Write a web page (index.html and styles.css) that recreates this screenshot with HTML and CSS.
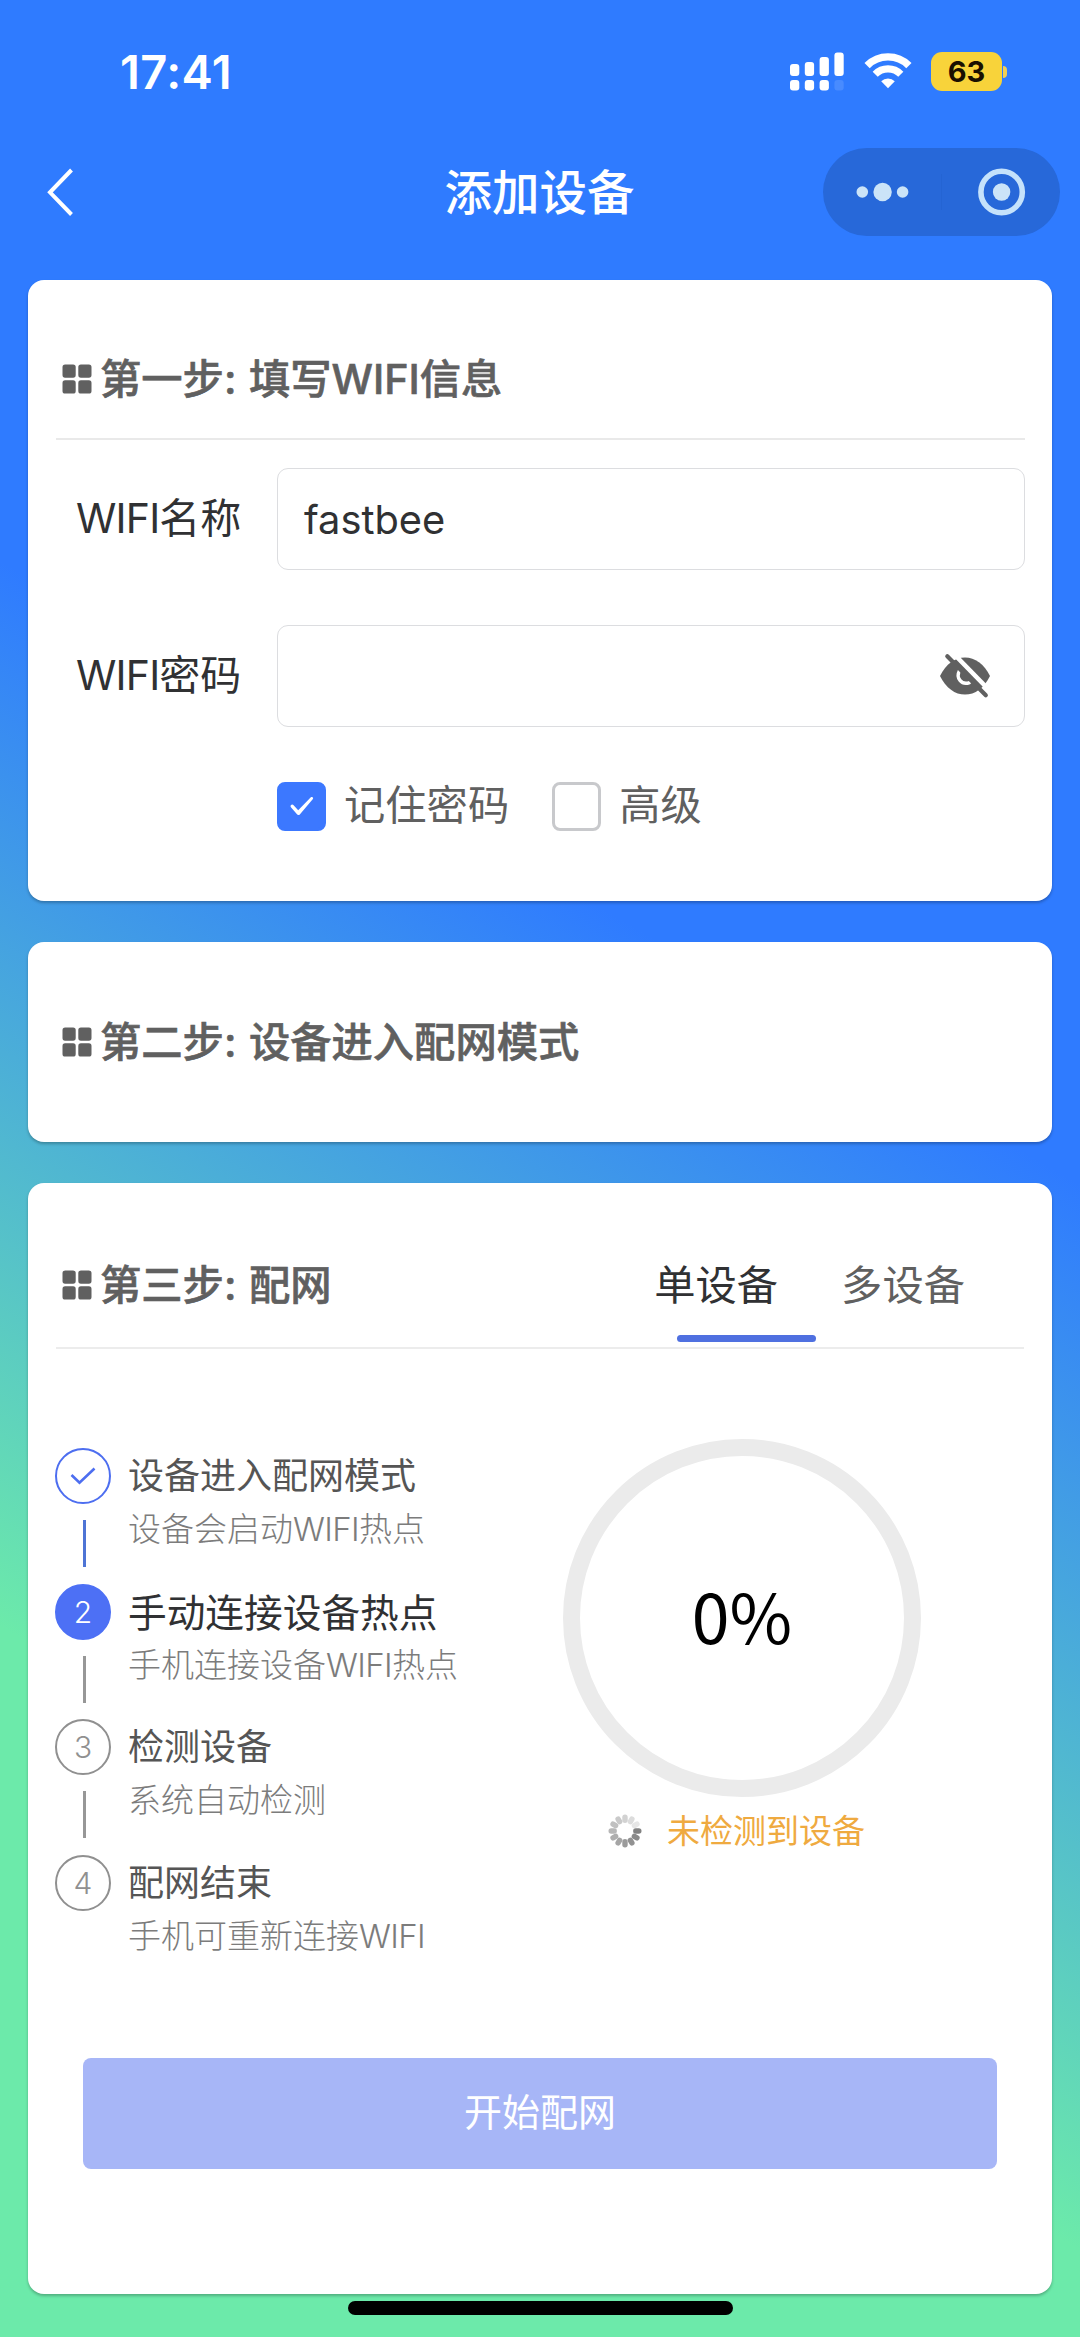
FILE: index.html
```html
<!DOCTYPE html>
<html lang="zh-CN">
<head>
<meta charset="utf-8">
<title>添加设备</title>
<link rel="stylesheet" href="styles.css">
</head>
<body>
<svg class="defs" width="0" height="0">
  <symbol id="grid" viewBox="0 0 30 30">
    <rect x="0.5" y="0.5" width="13.2" height="13.2" rx="2.6"/>
    <rect x="16.3" y="0.5" width="13.2" height="13.2" rx="2.6"/>
    <rect x="0.5" y="16.3" width="13.2" height="13.2" rx="2.6"/>
    <rect x="16.3" y="16.3" width="13.2" height="13.2" rx="2.6"/>
  </symbol>
</svg>
<div class="screen">
  <header class="status">
    <span class="time">17:41</span>
    <div class="indicators">
      <svg class="signal" width="54" height="39" viewBox="0 0 54 39" fill="#fff">
        <rect x="0" y="12" width="9.3" height="12" rx="3"/>
        <rect x="14.8" y="10" width="9.3" height="14" rx="3"/>
        <rect x="29.6" y="5" width="9.3" height="19" rx="3"/>
        <rect x="44.4" y="0.4" width="9.3" height="23.6" rx="3"/>
        <rect x="0" y="28" width="9.3" height="10.5" rx="3"/>
        <rect x="14.8" y="28" width="9.3" height="10.5" rx="3"/>
        <rect x="29.6" y="28" width="9.3" height="10.5" rx="3"/>
        <rect x="44.4" y="28" width="9.3" height="10.5" rx="3" fill-opacity=".12"/>
      </svg>
      <svg class="wifi" width="48" height="36" viewBox="0 0 48 36" fill="none" stroke="#fff">
        <path d="M3.1 12.6 A29.5 29.5 0 0 1 44.9 12.6" stroke-width="7.4"/>
        <path d="M11.2 21.2 A18 18 0 0 1 36.8 21.2" stroke-width="7.2"/>
        <path d="M24 35.3 L17.2 28.2 A9.8 9.8 0 0 1 30.8 28.2 Z" fill="#fff" stroke="none"/>
      </svg>
      <div class="battery"><span class="level">63</span><span class="nub"></span></div>
    </div>
  </header>
  <nav class="navbar">
    <svg class="back" width="28" height="50" viewBox="0 0 28 50" fill="none" stroke="#fff" stroke-width="4">
      <path d="M25.5 3 L4 25.3 L25.5 47.5"/>
    </svg>
    <h1 class="title">添加设备</h1>
    <div class="capsule">
      <svg width="237" height="88" viewBox="0 0 237 88">
        <g fill="#cbe4f8"><circle cx="39.3" cy="44" r="5.8"/><circle cx="59.6" cy="44" r="9.2"/><circle cx="79.6" cy="44" r="5.8"/></g>
        <path d="M118.5 26 V62" stroke="#2464d3" stroke-width="1"/>
        <circle cx="178.6" cy="44" r="20.7" fill="none" stroke="#c5e2fb" stroke-width="5.6"/>
        <circle cx="178.6" cy="44" r="8.7" fill="#cbe4f8"/>
      </svg>
    </div>
  </nav>
  <main class="cards">
    <section class="card card-wifi">
      <h2 class="step-title"><svg class="grid"><use href="#grid"/></svg>第一步: 填写WIFI信息</h2>
      <div class="rule"></div>
      <div class="form">
        <div class="field"><label class="label"><span class="latin">WIFI</span>名称</label><div class="input">fastbee</div></div>
        <div class="field"><label class="label"><span class="latin">WIFI</span>密码</label>
          <div class="input secret">
            <svg class="eye" width="52" height="44" viewBox="0 0 52 44">
              <path d="M1 22 C7 10 16 3.6 26 3.6 C36 3.6 45 10 51 22 C45 34 36 40.6 26 40.6 C16 40.6 7 34 1 22 Z" fill="#606060"/>
              <path d="M20.5 16.5 C16.5 24 22.5 31.5 30.5 28.6" fill="none" stroke="#fff" stroke-width="3.4" stroke-linecap="round"/>
              <path d="M11 -4 L54.5 40.5" stroke="#fff" stroke-width="4.6"/>
              <path d="M8.3 2.3 L46.8 41.3" stroke="#606060" stroke-width="4.2" stroke-linecap="round"/>
            </svg>
          </div>
        </div>
      </div>
      <div class="options">
        <span class="box checked"><svg width="24" height="20" viewBox="0 0 24 20" fill="#fff"><path d="M0.8 9.3 C1.6 8.4 2.8 8.3 3.6 9.2 L8.2 14.2 L20.6 1.4 C21.8 0.2 23.9 1.3 22.9 2.9 L10 18.2 C9 19.4 7.6 19.3 6.8 18 L0.9 11.2 C0.4 10.5 0.4 9.9 0.8 9.3 Z"/></svg></span>
        <span class="option first">记住密码</span>
        <span class="box"></span>
        <span class="option">高级</span>
      </div>
    </section>

    <section class="card card-mode">
      <h2 class="step-title"><svg class="grid"><use href="#grid"/></svg>第二步: 设备进入配网模式</h2>
    </section>

    <section class="card card-net">
      <div class="head">
        <h2 class="step-title"><svg class="grid"><use href="#grid"/></svg>第三步: 配网</h2>
        <div class="tabs"><span class="tab active">单设备</span><span class="tab">多设备</span></div>
      </div>
      <div class="body">
        <ol class="steps">
          <li class="step done"><span class="dot"><svg width="26" height="18" viewBox="0 0 26 18" fill="none" stroke="#4d6ef0" stroke-width="2.6"><path d="M1.5 8 L9.5 15.8 L24.5 1.5"/></svg></span><span class="name">设备进入配网模式</span><i class="line"></i><span class="desc">设备会启动<span class="latin">WIFI</span>热点</span></li>
          <li class="step current"><span class="dot">2</span><span class="name">手动连接设备热点</span><i class="line"></i><span class="desc">手机连接设备<span class="latin">WIFI</span>热点</span></li>
          <li class="step"><span class="dot">3</span><span class="name">检测设备</span><i class="line"></i><span class="desc">系统自动检测</span></li>
          <li class="step last"><span class="dot">4</span><span class="name">配网结束</span><i class="line"></i><span class="desc">手机可重新连接<span class="latin">WIFI</span></span></li>
        </ol>
        <div class="progress">
          <div class="ring">0%</div>
          <div class="state">
            <svg class="spinner" width="34" height="34" viewBox="-17 -17 34 34" stroke-width="5.4" stroke-linecap="round">
              <path d="M0 -13.8 V-10.8" stroke="#d2d2d2"/>
              <path d="M0 -13.8 V-10.8" stroke="#dcdcdc" transform="rotate(30)"/>
              <path d="M0 -13.8 V-10.8" stroke="#e6e6e6" transform="rotate(60)"/>
              <path d="M0 -13.8 V-10.8" stroke="#828282" transform="rotate(90)"/>
              <path d="M0 -13.8 V-10.8" stroke="#8a8a8a" transform="rotate(120)"/>
              <path d="M0 -13.8 V-10.8" stroke="#929292" transform="rotate(150)"/>
              <path d="M0 -13.8 V-10.8" stroke="#9b9b9b" transform="rotate(180)"/>
              <path d="M0 -13.8 V-10.8" stroke="#a5a5a5" transform="rotate(210)"/>
              <path d="M0 -13.8 V-10.8" stroke="#aeaeae" transform="rotate(240)"/>
              <path d="M0 -13.8 V-10.8" stroke="#b7b7b7" transform="rotate(270)"/>
              <path d="M0 -13.8 V-10.8" stroke="#c0c0c0" transform="rotate(300)"/>
              <path d="M0 -13.8 V-10.8" stroke="#c9c9c9" transform="rotate(330)"/>
            </svg>
            <span>未检测到设备</span>
          </div>
        </div>
      </div>
      <button class="start">开始配网</button>
    </section>
  </main>
  <div class="home"></div>
</div>
</body>
</html>
```
FILE: styles.css
```css
* { box-sizing: border-box; margin: 0; padding: 0; }
body {
  width: 1080px;
  height: 2337px;
  overflow: hidden;
  font-family: Inter, "Noto Sans CJK SC", sans-serif;
  font-size: 41.3px;
  color: #303133;
}
.defs { position: absolute; }
svg { display: block; flex: none; overflow: visible; }
.screen {
  display: flex;
  flex-direction: column;
  height: 2337px;
  background: linear-gradient(210deg, #2f7bff 40%, #6ceaaa 76%);
}
.latin { letter-spacing: -0.02em; }

.status {
  display: flex;
  justify-content: space-between;
  height: 143px;
  padding: 52px 73px 0 120px;
}
.time { font-size: 47px; font-weight: 600; line-height: 40px; color: #fff; letter-spacing: 0.4px; }
.indicators { display: flex; align-items: flex-start; height: 39px; }
.signal { margin-right: 20px; }
.wifi { margin: 1px 19px 0 0; }
.battery { display: flex; align-items: center; }
.level {
  width: 71px;
  height: 39px;
  border-radius: 11px;
  background: #f8d33a;
  color: #1a0f00;
  font-size: 29px;
  font-weight: 700;
  line-height: 39px;
  text-align: center;
}
.nub { width: 4px; height: 12px; margin-left: 1px; border-radius: 0 4px 4px 0; background: #f0cf55; }

.navbar {
  display: grid;
  grid-template-columns: 237px 1fr 237px;
  align-items: center;
  height: 97px;
  padding: 0 20px 0 46px;
}
.title { justify-self: center; margin: 2px 27px 0 0; font-size: 47.5px; font-weight: 500; line-height: 60px; color: #fff; }
.capsule { width: 237px; height: 88px; border-radius: 44px; background: #2768d9; }

.cards { display: flex; flex-direction: column; gap: 41px; padding: 40px 28px 0; }
.card { border-radius: 16px; background: #fff; box-shadow: 0 2px 3px rgba(0, 0, 0, .25); }
.card-wifi { height: 621px; padding: 69px 27px 0 28px; }
.card-mode { height: 200px; padding: 70px 27px 0 28px; }
.card-net { height: 1111px; padding: 72px 28px 0; }

.step-title {
  display: flex;
  align-items: center;
  padding-left: 6px;
  height: 60px;
  font-size: 41.3px;
  font-weight: 500;
  line-height: 60px;
  color: #606060;
  white-space: pre;
  word-spacing: 1.5px;
  -webkit-text-stroke: 0.6px #606060;
}
.grid { width: 30px; height: 30px; margin-right: 8px; fill: #606060; -webkit-text-stroke: 0; }
.rule { height: 2px; margin-top: 29px; background: #e9e9e9; }

.form { display: flex; flex-direction: column; gap: 55px; padding-top: 28px; }
.field { display: grid; grid-template-columns: 221px 1fr; align-items: center; }
.label { padding: 0 0 8px 20px; font-size: 41px; white-space: nowrap; }
.input {
  display: flex;
  align-items: center;
  height: 102px;
  padding: 0 33px 0 26px;
  border: 1.5px solid #dcdde0;
  border-radius: 11px;
  font-size: 39.8px;
}
.secret { justify-content: flex-end; }

.options { display: flex; align-items: center; height: 60px; margin: 49px 0 0 221px; color: #606060; }
.option { padding-bottom: 8px; }
.box {
  display: flex;
  align-items: center;
  justify-content: center;
  width: 49px;
  height: 49px;
  margin-right: 18px;
  border: 3px solid #c8c9cc;
  border-radius: 8px;
}
.checked { border-color: #3c78ff; background: #3c78ff; }
.first { margin-right: 43px; }

.head { display: flex; justify-content: space-between; height: 94px; border-bottom: 2px solid #ececec; }
.tabs { display: flex; gap: 63px; padding-right: 59px; line-height: 60px; color: #606060; }
.active { color: #303133; position: relative; }
.active::after {
  content: "";
  position: absolute;
  left: 23px;
  top: 80px;
  width: 139px;
  height: 7px;
  border-radius: 4px;
  background: #4f70e0;
}

.body { display: flex; height: 643px; padding-top: 90px; }
.steps { width: 506px; list-style: none; padding-top: 9px; margin-left: -1px; }
.step {
  display: grid;
  grid-template-columns: 56px 1fr;
  grid-template-rows: 56px 80px;
  column-gap: 17px;
  align-items: center;
  height: 135.7px;
}
.dot {
  display: flex;
  align-items: center;
  justify-content: center;
  width: 56px;
  height: 56px;
  border: 2.5px solid #909090;
  border-radius: 50%;
  font-size: 30px;
  font-weight: 300;
  color: #909090;
}
.name { padding-bottom: 6px; font-size: 36px; color: #555; }
.line { width: 3px; height: 47px; margin: -1px 0 0 28px; background: #979797; }
.desc { align-self: start; font-size: 33px; font-weight: 300; line-height: 50px; color: #7c7c7c; }
.done .dot { border-color: #4d6ef0; }
.done .line { background: #4e74d5; }
.current .dot { border-color: #4d70f5; background: #4d70f5; color: #fff; }
.current .name { padding-bottom: 3px; font-size: 38.7px; color: #303133; }
.last .line { visibility: hidden; }

.progress { display: flex; flex-direction: column; width: 358px; margin-left: 2px; }
.ring {
  display: flex;
  align-items: center;
  justify-content: center;
  height: 358px;
  padding-bottom: 8px;
  border: 17px solid #ebebeb;
  border-radius: 50%;
  font-family: "Noto Sans CJK SC", sans-serif;
  font-size: 68px;
  color: #000;
}
.state { display: flex; align-items: center; gap: 25px; height: 68px; padding-left: 45px; font-size: 33px; line-height: 50px; color: #efaa40; }

.start {
  display: block;
  width: 914px;
  height: 111px;
  margin: 66px auto 0;
  border: 0;
  border-radius: 8px;
  background: #a7b6f7;
  color: #fff;
  font: 38px Inter, "Noto Sans CJK SC", sans-serif;
  padding-bottom: 9px;
}
.home { width: 385px; height: 14px; margin: 7px 0 0 348px; border-radius: 7px; background: #000; }
```
